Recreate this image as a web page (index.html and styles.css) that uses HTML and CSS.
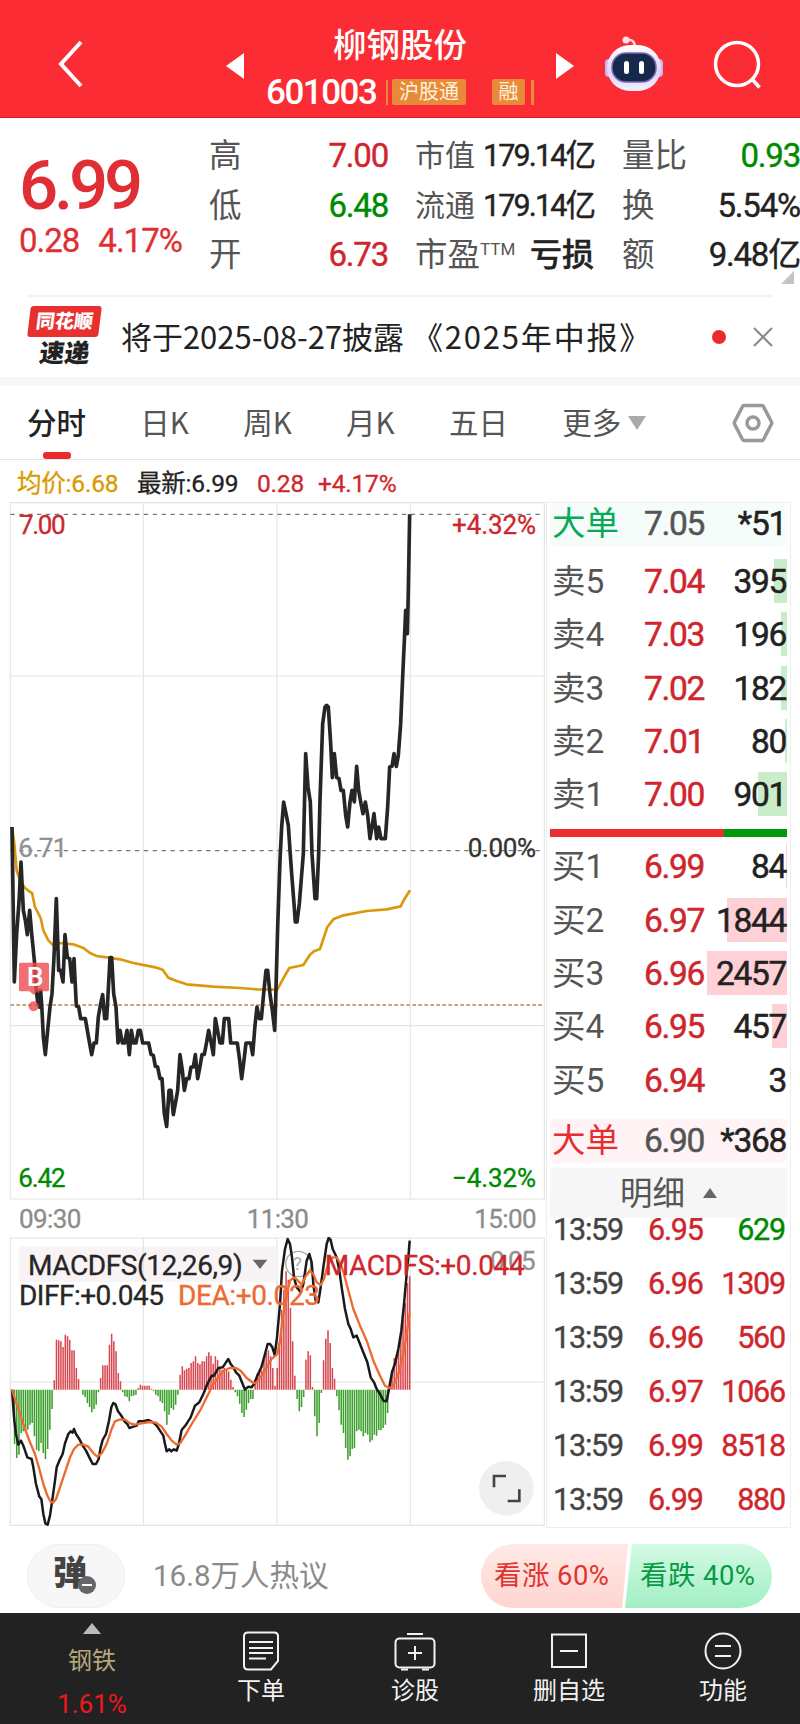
FILE: index.html
```html
<!doctype html>
<html lang="zh-CN">
    <head>
        <meta charset="UTF-8" />
        <meta name="viewport" content="width=device-width" />
        <title>柳钢股份 601003</title>
        <link rel="stylesheet" href="styles.css">
    </head>
    <body>
        <header class="topbar">
            <svg class="back" width="28" height="50" viewBox="0 0 28 50"><path d="M24 3 4 25 24 47" /></svg>
            <svg class="prev" width="18" height="26" viewBox="0 0 18 26"><path d="M18 0V26L0 13z" /></svg>
            <div class="stock">
                <div class="stockName">柳钢股份</div>
                <div class="stockCode">
                    <span class="code">601003</span>
                    <i class="sliver"></i>
                    <span class="tag wide">沪股通</span>
                    <span class="tag">融</span>
                    <i class="sliver end"></i>
                </div>
            </div>
            <svg class="next" width="18" height="26" viewBox="0 0 18 26"><path d="M0 0V26L18 13z" /></svg>
            <svg class="robot" width="60" height="56" viewBox="0 0 60 56">
                <defs>
                    <linearGradient id="shell" x1="0" y1="0" x2="0" y2="1">
                        <stop offset="0" stop-color="#fff" />
                        <stop offset=".6" stop-color="#e0d4fa" />
                        <stop offset="1" stop-color="#f4f0ff" />
                    </linearGradient>
                </defs>
                <path d="M22 4Q31 2 31 12" fill="none" stroke="#f5d5e4" stroke-width="2.5" />
                <circle cx="22" cy="4" r="3.5" fill="#ffdfe6" />
                <rect x="1" y="23" width="9" height="18" rx="4" fill="#c9b8f0" />
                <rect x="50" y="23" width="9" height="18" rx="4" fill="#c9b8f0" />
                <rect x="3" y="9" width="54" height="46" rx="23" fill="url(#shell)" />
                <rect x="8" y="17" width="44" height="29" rx="14" fill="#17284d" stroke="#7568b5" stroke-width="1.5" />
                <rect x="20" y="25" width="5" height="13" rx="2.5" fill="#fff" />
                <rect x="35" y="25" width="5" height="13" rx="2.5" fill="#fff" />
            </svg>
            <svg class="search" width="50" height="50" viewBox="0 0 50 50"><circle cx="25" cy="24" r="21.5" /><path d="M40 39 47.500 47.500" /></svg>
        </header>

        <section class="quote">
            <div class="last">
                <div class="price">6.99</div>
                <div class="change"><span>0.28</span><span>4.17%</span></div>
            </div>
            <dl class="stats first">
                <div><dt>高</dt><dd class="up">7.00</dd></div>
                <div><dt>低</dt><dd class="down">6.48</dd></div>
                <div><dt>开</dt><dd class="up">6.73</dd></div>
            </dl>
            <dl class="stats second">
                <div><dt class="narrow">市值</dt><dd>179.14亿</dd></div>
                <div><dt class="narrow">流通</dt><dd>179.14亿</dd></div>
                <div><dt>市盈<sup>TTM</sup></dt><dd class="bold">亏损</dd></div>
            </dl>
            <dl class="stats third">
                <div><dt>量比</dt><dd class="down">0.93</dd></div>
                <div><dt>换</dt><dd>5.54%</dd></div>
                <div><dt>额</dt><dd>9.48亿</dd></div>
            </dl>
            <i class="corner"></i>
        </section>

        <section class="notice">
            <div class="brand">
                <span class="brandTop">同花顺</span>
                <span class="brandBottom">速递</span>
            </div>
            <span class="noticeText">将于2025-08-27披露<span class="report">《2025年中报》</span></span>
            <i class="dot"></i>
            <svg class="close" width="20" height="20" viewBox="0 0 20 20"><path d="M1 1 19 19M19 1 1 19" /></svg>
        </section>

        <nav class="tabs">
            <span class="tab active">分时</span>
            <span class="tab">日K</span>
            <span class="tab">周K</span>
            <span class="tab">月K</span>
            <span class="tab">五日</span>
            <span class="tab">更多<i class="caret"></i></span>
            <svg class="gear" width="42" height="40" viewBox="0 0 42 40"><path d="M12 2.500H30Q31 2.500 31.500 3.500L39.500 19Q40 20 39.500 21L31.500 36.500Q31 37.500 30 37.500H12Q11 37.500 10.500 36.500L2.500 21Q2 20 2.500 19L10.500 3.500Q11 2.500 12 2.500z" /><circle cx="21" cy="20" r="6" /></svg>
        </nav>

        <div class="legend">
            <span class="avg">均价:6.68</span>
            <span class="latest">最新:6.99</span>
            <span class="diff up">0.28</span>
            <span class="pct up">+4.17%</span>
        </div>

        <main class="board">
            <div class="charts">
                <svg class="chart" width="546" height="698" viewBox="0 35 1638 2094">
                    <path class="grid" d="M31 37H1633V2126H31zM430 37V2126M831 37V2126M1231 37V2126M31 557H1633M31 1606H1633" />
                    <path class="dash" d="M31 72H1633M31 1081H1633" />
                    <path class="dash cost" d="M31 1544H1633" />
                    <polyline class="avgLine" points="36,1010 43,1060 50,1140 60,1170 75,1193 88,1203 96,1208 105,1250 122,1283 130,1320 145,1350 160,1365 180,1358 220,1362 252,1374 270,1388 290,1397 320,1401 360,1407 400,1418 440,1426 470,1432 488,1438 505,1462 530,1472 560,1482 640,1489 720,1493 770,1497 832,1498 850,1464 868,1433 910,1424 930,1393 942,1383 960,1376 972,1340 982,1310 1000,1287 1030,1275 1100,1262 1160,1257 1202,1248 1212,1228 1230,1200" />
                    <polyline class="priceLine" points="36,1010 43,1475 50,1330 57,1235 63,1115 70,1260 76,1290 82,1333 89,1260 95,1330 103,1410 108,1490 113,1535 119,1550 122,1500 126,1560 130,1640 136,1693 143,1620 150,1550 156,1510 162,1400 169,1225 176,1440 182,1440 189,1475 195,1333 202,1402 209,1405 216,1475 222,1405 229,1547 236,1550 242,1585 256,1585 262,1620 269,1660 275,1693 282,1658 289,1658 295,1580 302,1540 308,1513 314,1585 320,1585 327,1460 330,1402 335,1402 341,1510 348,1550 354,1658 360,1620 367,1658 374,1658 381,1620 388,1693 394,1620 401,1658 408,1658 415,1620 421,1620 428,1658 446,1658 453,1692 460,1695 466,1728 473,1730 480,1765 486,1765 493,1870 500,1908 507,1800 513,1800 520,1873 527,1835 533,1800 540,1693 547,1740 553,1800 560,1765 567,1765 573,1730 580,1730 586,1693 593,1765 600,1728 606,1693 613,1692 620,1655 626,1620 633,1655 640,1693 646,1585 653,1622 660,1658 667,1658 673,1585 686,1585 692,1658 712,1658 719,1710 725,1765 732,1710 738,1658 752,1658 758,1693 765,1605 771,1550 778,1585 784,1585 791,1510 798,1440 803,1440 810,1512 817,1560 824,1620 827,1530 833,1310 840,1110 845,1010 851,935 865,1005 870,1080 875,1150 882,1240 886,1295 891,1295 898,1240 904,1165 910,1090 912,1000 917,790 924,890 931,935 936,1090 945,1225 950,1225 956,1090 960,930 968,700 975,650 980,645 985,650 992,760 997,862 1003,790 1010,862 1017,865 1023,900 1030,900 1037,975 1043,1010 1050,935 1056,900 1063,935 1070,828 1076,900 1083,940 1089,970 1096,935 1103,975 1110,1045 1116,1010 1122,970 1130,1045 1136,1010 1143,1045 1156,1045 1163,950 1169,830 1176,828 1182,790 1189,828 1195,795 1202,700 1208,560 1214,430 1217,360 1222,430 1225,300 1229,72" />
                    <g class="buyMark">
                        <path d="M62 1417H142Q147 1417 147 1422V1498Q147 1503 142 1503H112L102 1514 88 1503H62Q57 1503 57 1498V1422Q57 1417 62 1417z" />
                        <circle cx="101" cy="1548" r="15" />
                        <text x="80" y="1488" textLength="47">B</text>
                    </g>
                    <text class="scale upFill" x="57" y="131" textLength="140">7.00</text>
                    <text class="scale upFill" x="1356" y="131" textLength="252">+4.32%</text>
                    <text class="scale grey" x="55" y="1101" textLength="147">6.71</text>
                    <text class="scale" x="1403" y="1101" textLength="205">0.00%</text>
                    <text class="scale downFill" x="55" y="2089" textLength="142">6.42</text>
                    <text class="scale downFill" x="1356" y="2089" textLength="252">−4.32%</text>
                </svg>
                <div class="hours"><span>09:30</span><span>11:30</span><span>15:00</span></div>
                <svg class="chart" width="546" height="290" viewBox="0 49 1638 870">
                    <path class="grid" d="M31 52H1633V914H31zM430 52V914M831 52V914M1231 52V914M31 484H1633" />
                    <rect class="picker" x="57" y="78" width="774" height="106" rx="10" />
                    <path class="grid" d="M430 78V184" />
                    <circle class="help" cx="895" cy="130" r="38" />
                    <text class="helpText" x="880" y="149">?</text>
                    <text class="scale grey" x="1470" y="148" textLength="137">0.05</text>
                    <path class="bars upBars" id="upBars" />
                    <path class="bars downBars" id="downBars" />
                    <polyline class="dif" points="36,507 43,600 48,640 55,672 63,660 70,675 82,710 95,715 100,740 108,790 118,828 124,835 130,880 136,908 143,912 150,885 158,830 165,780 170,740 178,720 188,700 195,668 205,640 212,632 218,636 222,625 228,640 238,655 248,675 258,690 268,710 278,730 288,730 296,715 302,680 308,658 318,640 327,600 334,560 340,547 346,550 354,572 364,585 374,603 382,610 388,622 400,618 410,615 416,602 430,602 446,598 460,606 470,615 480,630 490,645 495,670 500,692 508,686 514,692 522,686 530,690 536,672 545,628 558,612 572,590 585,555 598,545 610,520 622,490 635,465 642,465 655,442 668,440 678,425 685,415 692,430 700,440 708,455 718,465 728,490 735,507 745,498 755,500 762,490 772,465 784,440 795,400 803,370 810,370 817,380 824,403 831,350 840,250 846,150 855,85 863,55 870,70 876,110 882,170 890,200 902,215 910,190 920,120 928,100 935,125 940,190 947,240 955,245 962,200 970,140 980,70 986,52 992,58 998,85 1010,110 1018,150 1025,200 1035,265 1045,310 1052,325 1060,350 1070,345 1078,365 1088,390 1102,425 1112,470 1122,485 1130,505 1140,520 1150,540 1160,542 1168,500 1176,455 1186,425 1195,385 1204,330 1212,250 1220,160 1225,110 1229,60" />
                    <polyline class="dea" points="36,507 45,535 60,580 75,625 90,665 105,700 118,745 130,790 142,825 152,843 160,846 168,835 180,800 195,755 210,710 222,685 235,672 250,672 265,678 280,697 292,708 305,698 320,670 335,625 345,602 358,597 375,597 390,608 405,612 425,608 450,604 468,606 485,618 500,640 515,660 530,672 540,668 555,645 575,610 600,570 620,530 640,490 660,463 675,448 690,442 708,442 722,450 740,472 760,487 770,485 785,465 800,440 815,415 832,400 840,360 847,300 858,230 870,180 882,170 892,178 905,192 918,165 930,150 940,160 950,185 962,193 972,175 984,130 998,110 1010,110 1022,130 1032,160 1045,210 1060,265 1080,315 1100,360 1120,420 1140,465 1155,495 1168,502 1180,495 1195,460 1210,400 1220,340 1229,275" />
                    <text class="macd" x="84" y="164" textLength="644">MACDFS(12,26,9)</text>
                    <path class="pickerCaret" d="M758 117H802L780 145z" />
                    <text class="macd upFill" x="974" y="162" textLength="600">MACDFS:+0.044</text>
                    <text class="macd" x="57" y="254" textLength="435">DIFF:+0.045</text>
                    <text class="macd deaText" x="534" y="252" textLength="426">DEA:+0.023</text>
                    <circle class="expand" cx="1519" cy="803" r="82" />
                    <path class="expandIcon" d="M1482 800V766H1518M1523 841H1558V806" />
                </svg>
            </div>

            <aside class="book">
                <div class="row big sell"><b>大单</b><span>7.05</span><em>*51</em></div>
                <div class="levels asks">
                    <div class="row"><b>卖5</b><span>7.04</span><em>395</em><i style="width: 13px"></i></div>
                    <div class="row"><b>卖4</b><span>7.03</span><em>196</em><i style="width: 6px"></i></div>
                    <div class="row"><b>卖3</b><span>7.02</span><em>182</em><i style="width: 6px"></i></div>
                    <div class="row"><b>卖2</b><span>7.01</span><em>80</em><i style="width: 2px"></i></div>
                    <div class="row"><b>卖1</b><span>7.00</span><em>901</em><i style="width: 29px"></i></div>
                </div>
                <div class="ratio"><i style="width: 73.400%"></i></div>
                <div class="levels bids">
                    <div class="row"><b>买1</b><span>6.99</span><em>84</em><i style="width: 1px"></i></div>
                    <div class="row"><b>买2</b><span>6.97</span><em>1844</em><i style="width: 60px"></i></div>
                    <div class="row"><b>买3</b><span>6.96</span><em>2457</em><i style="width: 80px"></i></div>
                    <div class="row"><b>买4</b><span>6.95</span><em>457</em><i style="width: 15px"></i></div>
                    <div class="row"><b>买5</b><span>6.94</span><em>3</em></div>
                </div>
                <div class="row big buy"><b>大单</b><span>6.90</span><em>*368</em></div>
                <div class="detail">明细<i class="caretUp"></i></div>
                <div class="ticks">
                    <div class="tick"><span>13:59</span><span class="up">6.95</span><span class="down">629</span></div>
                    <div class="tick"><span>13:59</span><span class="up">6.96</span><span class="up">1309</span></div>
                    <div class="tick"><span>13:59</span><span class="up">6.96</span><span class="up">560</span></div>
                    <div class="tick"><span>13:59</span><span class="up">6.97</span><span class="up">1066</span></div>
                    <div class="tick"><span>13:59</span><span class="up">6.99</span><span class="up">8518</span></div>
                    <div class="tick"><span>13:59</span><span class="up">6.99</span><span class="up">880</span></div>
                </div>
            </aside>
        </main>

        <section class="talk">
            <div class="bullet">弹<svg width="18" height="18" viewBox="0 0 18 18"><circle cx="9" cy="9" r="9" fill="#666" /><path d="M4 9H14" stroke="#fff" stroke-width="2" /></svg></div>
            <span class="hot">16.8万人热议</span>
            <div class="vote">
                <span class="bull">看涨 60%</span>
                <span class="bear">看跌 40%</span>
            </div>
        </section>

        <footer class="bottombar">
            <div class="sector"><i class="caretUp"></i><span>钢铁</span><strong>1.61%</strong></div>
            <div class="action">
                <svg width="40" height="40" viewBox="0 0 40 40"><path d="M7 1.500H33Q37 1.500 37 5.500V30L30 38.500H7Q3 38.500 3 34.500V5.500Q3 1.500 7 1.500z" /><path d="M8 11H32M8 17H32M8 22H32M8 27.500H25" /></svg>
                <span>下单</span>
            </div>
            <div class="action">
                <svg width="42" height="40" viewBox="0 0 42 40"><rect x="1.500" y="7.500" width="39" height="29" rx="4" /><path d="M13 3H29M21 15V29M14 22H28M7 38.500H14M28 38.500H35" /></svg>
                <span>诊股</span>
            </div>
            <div class="action">
                <svg width="40" height="40" viewBox="0 0 40 40"><path d="M3 3.500H37V36H3zM11 20H29" /></svg>
                <span>删自选</span>
            </div>
            <div class="action">
                <svg width="40" height="40" viewBox="0 0 40 40"><circle cx="20" cy="20" r="17.500" /><path d="M12 15H28M12 25H28" /></svg>
                <span>功能</span>
            </div>
        </footer>
        <script src="macd.js"></script>
    </body>
</html>
```
FILE: macd.js
```js
// one histogram value per minute, positive bars are drawn above the zero line
const histogram = [
    0, -163, -205, -195, -130, -125, -125, -120, -105, -100, -140, -180, -185, -160, -190, -208, -178, -120, -58,
    28, 150, 148, 145, 128, 165, 160, 150, 118, 118, 65, 32, 0, -15, -22, -40, -52, -68, -58, -45, -8,
    35, 73, 73, 73, 135, 168, 145, 115, 50, 25, -8, -20, -22, -35, -20, -18, -15,
    5, 15, 12, 12, 12, 12, 3, -3, -15, -20, -35, -40, -65, -105, -75, -55, -60, -45, -15,
    45, 70, 58, 63, 65, 80, 85, 100, 80, 76, 85, 85, 100, 112, 102, 78, 100, 90, 65, 60, 65, 62, 55, 30, 8,
    -8, -20, -42, -70, -82, -60, -40, -28, -28,
    25, 50, 60, 58, 90, 110, 118, 100, 65, 12, 65, 145, 240, 300, 355, 330, 245, 145, 42,
    -28, -65, -52, -22, 90, 115, 103, 8, -80, -140, -100, -10, 88, 153, 178, 140, 65, 33,
    -20, -62, -105, -130, -175, -210, -200, -178, -175, -125, -120, -125, -140, -130, -135, -158, -152,
    -135, -138, -122, -122, -115, -105, -70, 10, 60, 95, 105, 120, 170, 210, 260, 320, 340
];
const zero = 507;
const step = (1229 - 37) / (histogram.length - 1);

let up = "";
let down = "";
histogram.forEach((value, i) => {
    const bar = `M${(37 + i * step).toFixed(1)} ${zero}v${-value}`;
    if (value > 0) up += bar;
    if (value < 0) down += bar;
});
document.getElementById("upBars").setAttribute("d", up);
document.getElementById("downBars").setAttribute("d", down);
```
FILE: styles.css
```css
* {
    box-sizing: border-box;
}
body {
    width: 800px;
    margin: 0;
    background-color: #fff;
    color: #222;
    font-family: Roboto, "Noto Sans CJK SC", sans-serif;
    overflow-x: hidden;
}
i,
em {
    font-style: normal;
}
svg {
    display: block;
    flex: none;
}
.up {
    color: #cf262d;
}
.down {
    color: #008a00;
}

/* header */
.topbar {
    display: flex;
    height: 118px;
    background-color: #fb2c33;
    border-bottom: 1px solid #c32530;
    color: #fff;
}
.back {
    margin: 39px 0 0 57px;
    fill: none;
    stroke: #fff;
    stroke-width: 4;
}
.prev,
.next {
    margin-top: 53px;
    fill: #fff;
}
.prev {
    margin-left: 141px;
}
.stock {
    width: 312px;
    padding: 25px 0 0 22px;
}
.stockName {
    padding-left: 67px;
    font-size: 33.5px;
    font-weight: 500;
    line-height: 42px;
}
.stockCode {
    display: flex;
    align-items: center;
    margin-top: 8px;
    height: 34px;
}
.code {
    width: 120px;
    font-size: 35px;
    font-weight: 500;
    letter-spacing: -1.5px;
}
.sliver {
    width: 2px;
    height: 25px;
    margin-right: 4px;
    background-color: #e98a3a;
}
.sliver.end {
    width: 3px;
    margin: 0 0 0 6px;
}
.tag {
    width: 33px;
    height: 26px;
    border-radius: 2px;
    background-color: #e98a3a;
    color: #fff3dc;
    font-size: 20px;
    line-height: 26px;
    text-align: center;
}
.tag.wide {
    width: 74px;
    margin-right: 26px;
}
.robot {
    margin: 36px 0 0 30px;
}
.search {
    margin: 40px 0 0 48px;
    fill: none;
    stroke: #fff;
    stroke-width: 3.5;
}

/* quote */
.quote {
    position: relative;
    display: flex;
    height: 177px;
    padding-top: 13px;
}
.last {
    width: 209px;
    padding: 20px 0 0 19px;
    color: #df2f34;
}
.price {
    font-size: 69px;
    font-weight: 500;
    letter-spacing: -4.2px;
    line-height: 70px;
}
.change {
    display: flex;
    gap: 19px;
    font-size: 33px;
    letter-spacing: -1px;
    line-height: 40px;
    -webkit-text-stroke: 0.3px;
}
.stats {
    margin: 0;
    font-size: 33px;
    line-height: 50px;
    white-space: nowrap;
}
.stats div {
    display: flex;
    justify-content: space-between;
    height: 49.7px;
}
.stats dt {
    color: #555;
    font-size: 32.5px;
}
.stats .narrow {
    font-size: 30px;
}
.stats dd {
    margin: 0;
    letter-spacing: -1.2px;
    -webkit-text-stroke: 0.4px;
}
.stats sup {
    font-size: 17px;
    line-height: 10px;
    vertical-align: 11px;
}
.stats.first {
    width: 179px;
}
.stats.second {
    width: 179px;
    margin-left: 27px;
}
.stats.second dd {
    font-size: 30.5px;
    letter-spacing: -1.9px;
}
.stats.second .bold {
    font-size: 32px;
    font-weight: 500;
    letter-spacing: 0;
}
.stats.third {
    width: 178px;
    margin-left: 28px;
}
.corner {
    position: absolute;
    right: 6px;
    bottom: 11px;
    border-left: 13px solid transparent;
    border-bottom: 13px solid #c4c4c4;
}

/* notice */
.notice {
    display: flex;
    align-items: center;
    height: 82px;
    margin: 0 27px;
    border-top: 2px solid #f3f3f3;
}
.brand {
    width: 71px;
    margin: 0 21px 0 2px;
}
.brandTop,
.brandBottom {
    display: block;
    font-weight: 900;
    text-align: center;
    transform: skewX(-7deg);
}
.brandTop {
    height: 31px;
    margin-top: 2px;
    border-radius: 3px;
    background-color: #e8302f;
    color: #fff;
    font-size: 19px;
    line-height: 31px;
}
.brandBottom {
    font-size: 25px;
    line-height: 33px;
}
.noticeText {
    width: 592px;
    font-family: "Noto Sans CJK SC", sans-serif;
    font-size: 31px;
    line-height: 44px;
    margin-top: -3px;
    white-space: nowrap;
}
.report {
    margin-left: 8px;
    letter-spacing: 1.8px;
}
.dot {
    width: 14px;
    height: 14px;
    border-radius: 50%;
    background-color: #eb2b2b;
}
.close {
    margin-left: 27px;
    stroke: #888;
    stroke-width: 2;
}

/* tabs */
.tabs {
    display: flex;
    align-items: center;
    height: 83px;
    padding: 0 26px 0 27px;
    border-top: 9px solid #f6f6f6;
    border-bottom: 1px solid #e6e6e6;
}
.tab {
    height: 73px;
    margin-right: 54.3px;
    color: #555;
    font-family: "Noto Sans CJK SC", sans-serif;
    font-size: 29.5px;
    line-height: 71px;
    white-space: nowrap;
}
.tab.active {
    display: flex;
    flex-direction: column;
    align-items: center;
    color: #222;
    font-weight: 500;
}
.tab.active::after {
    content: "";
    width: 28px;
    height: 7px;
    margin-top: -5px;
    border-radius: 3px;
    background-color: #eb2b2b;
}
.caret {
    display: inline-block;
    margin: 0 0 4px 7px;
    border: 9px solid transparent;
    border-top: 14px solid #aaa;
    border-bottom: 0;
}
.gear {
    margin-left: auto;
    fill: none;
    stroke: #999;
    stroke-width: 3.5;
}
.legend {
    display: flex;
    height: 42px;
    padding-left: 17px;
    font-size: 24.5px;
    letter-spacing: -0.2px;
    line-height: 48px;
    white-space: nowrap;
    -webkit-text-stroke: 0.3px;
}
.avg {
    width: 120px;
    color: #d99a00;
}
.latest {
    width: 120px;
}
.diff {
    width: 61px;
}

/* charts */
.board {
    display: flex;
    height: 1027px;
}
.charts {
    width: 546px;
}
.grid {
    fill: none;
    stroke: #e4e4e4;
    stroke-width: 3.4;
}
.dash {
    fill: none;
    stroke: #777;
    stroke-width: 4;
    stroke-dasharray: 13 13.7;
}
.cost {
    stroke: #b8864b;
    stroke-dasharray: 11 7;
}
.avgLine,
.priceLine,
.dif,
.dea {
    fill: none;
    stroke-linejoin: round;
}
.avgLine {
    stroke: #d89a0c;
    stroke-width: 8;
}
.priceLine {
    stroke: #262626;
    stroke-width: 11;
}
.scale {
    fill: #333;
    font-size: 78px;
    stroke: #333;
    stroke-width: 1;
}
.scale.grey {
    fill: #919191;
    stroke: #919191;
}
.scale.upFill {
    fill: #cf262d;
    stroke: #cf262d;
}
.scale.downFill {
    fill: #008a00;
    stroke: #008a00;
}
.buyMark {
    fill: #ee4a50;
    fill-opacity: 0.8;
}
.buyMark text {
    fill: #fff;
    fill-opacity: 1;
    font-size: 80px;
    font-weight: 500;
}
.hours {
    display: flex;
    justify-content: space-between;
    height: 37px;
    padding: 0 10px 0 19px;
    color: #8c8c8c;
    font-size: 26px;
    letter-spacing: -0.6px;
    line-height: 38px;
    -webkit-text-stroke: 0.3px;
}
.picker {
    fill: #f8f4f6;
}
.pickerCaret {
    fill: #666;
}
.help {
    fill: none;
    stroke: #aaa;
    stroke-width: 4;
}
.helpText {
    fill: #aaa;
    font-size: 54px;
}
.bars {
    stroke-width: 4.6;
}
.upBars {
    stroke: #d84850;
}
.downBars {
    stroke: #3b9f2b;
}
.dif {
    stroke: #1a1a1a;
    stroke-width: 7.5;
}
.dea {
    stroke: #ee6a31;
    stroke-width: 7;
}
.macd {
    fill: #262626;
    stroke: #262626;
    stroke-width: 1;
    font-size: 84px;
}
.macd.upFill {
    fill: #cf262d;
    stroke: #cf262d;
}
.macd.deaText {
    fill: #ee6a31;
    stroke: #ee6a31;
}
.expand {
    fill: #efefef;
}
.expandIcon {
    fill: none;
    stroke: #444;
    stroke-width: 8;
}

/* order book */
.book {
    width: 245px;
    height: 1026px;
    padding: 0 3px 0 3px;
    border: 1px solid #eee;
}
.row {
    position: relative;
    display: flex;
    height: 53.3px;
    padding: 0 1px 0 2px;
    font-size: 33.5px;
    line-height: 53px;
}
.row b {
    width: 92px;
    color: #555;
    font-weight: 400;
    white-space: nowrap;
}
.row span,
.row em {
    letter-spacing: -1.3px;
    -webkit-text-stroke: 0.5px;
}
.row span {
    color: #cf262d;
}
.row em {
    z-index: 1;
    margin-left: auto;
}
.row i {
    position: absolute;
    right: 0;
    top: 4px;
    height: 44px;
}
.asks i {
    background-color: #c9ecc9;
}
.bids i {
    background-color: #ffd0d5;
}
.big {
    height: 44px;
    border-radius: 6px;
    line-height: 42px;
}
.big span {
    color: #555;
}
.sell {
    background-color: #f5fcf9;
}
.sell b {
    color: #08a957;
}
.buy {
    margin-top: 12px;
    background-color: #fff3f5;
    line-height: 44px;
}
.buy b {
    color: #e62e32;
}
.asks {
    padding-top: 8px;
}
.ratio {
    height: 8px;
    margin: 8px 0 3px;
    background-color: #009b0a;
}
.ratio i {
    display: block;
    height: 8px;
    background-color: #ea302f;
}
.detail {
    position: relative;
    z-index: 1;
    height: 50px;
    margin-top: 5px;
    padding-left: 70px;
    background-color: #f6f6f6;
    color: #555;
    font-size: 32.5px;
    line-height: 52px;
}
.caretUp {
    display: inline-block;
    margin: 0 0 7px 18px;
    border: 7px solid transparent;
    border-top: 0;
    border-bottom: 10px solid #666;
}
.ticks {
    margin-top: -15px;
}
.tick {
    display: grid;
    grid-template-columns: 95px 60px 1fr;
    height: 54px;
    padding: 0 2px 0 3px;
    font-size: 30.5px;
    letter-spacing: -1.2px;
    line-height: 54px;
    -webkit-text-stroke: 0.4px;
}
.tick span:last-child {
    text-align: right;
}
.tick span:first-child {
    color: #444;
}

/* discussion */
.talk {
    display: flex;
    align-items: center;
    height: 84px;
    padding: 10px 28px 0 27px;
}
.bullet {
    position: relative;
    width: 98px;
    height: 64px;
    padding-left: 25px;
    border: 1px solid #f0f0f0;
    border-radius: 32px;
    background-color: #f7f7f7;
    color: #444;
    font-size: 34px;
    font-weight: 900;
    line-height: 56px;
}
.bullet svg {
    position: absolute;
    left: 50px;
    top: 31px;
}
.hot {
    margin-left: 28px;
    color: #8a8a8a;
    font-size: 29.5px;
    line-height: 64px;
}
.vote {
    display: flex;
    width: 291px;
    height: 64px;
    margin-left: auto;
    border-radius: 32px;
    overflow: hidden;
    font-size: 27.5px;
    letter-spacing: 0.4px;
    line-height: 64px;
    white-space: nowrap;
}
.bull {
    width: 147px;
    padding-left: 13px;
    background: linear-gradient(#ffe9e6, #ffd5d0);
    clip-path: polygon(0 0, 100% 0, 141px 100%, 0 100%);
    color: #e2342f;
}
.bear {
    width: 147px;
    margin-left: -3px;
    padding-left: 15px;
    background: linear-gradient(#d3fbe4, #a2eec3);
    clip-path: polygon(7px 0, 100% 0, 100% 100%, 0 100%);
    color: #089b45;
}

/* bottom bar */
.bottombar {
    display: flex;
    height: 111px;
    padding: 0 0 0 15px;
    background-color: #222;
    color: #f2f2f2;
    font-size: 24px;
}
.sector,
.action {
    display: flex;
    flex-direction: column;
    align-items: center;
    width: 154px;
}
.sector {
    width: 169px;
    padding-right: 15px;
    color: #b7a77d;
}
.sector .caretUp {
    margin: 10px 0 0;
    border-width: 0 9px 11px;
    border-bottom-color: #bbb;
}
.sector span {
    margin-top: 9px;
    line-height: 36px;
}
.sector strong {
    margin-top: 9px;
    color: #f0181c;
    font-size: 26px;
    font-weight: 400;
    line-height: 32px;
}
.action svg {
    margin-top: 18px;
    fill: none;
    stroke: #f2f2f2;
    stroke-width: 2;
}
.action span {
    margin-top: 3px;
    line-height: 34px;
}
```
